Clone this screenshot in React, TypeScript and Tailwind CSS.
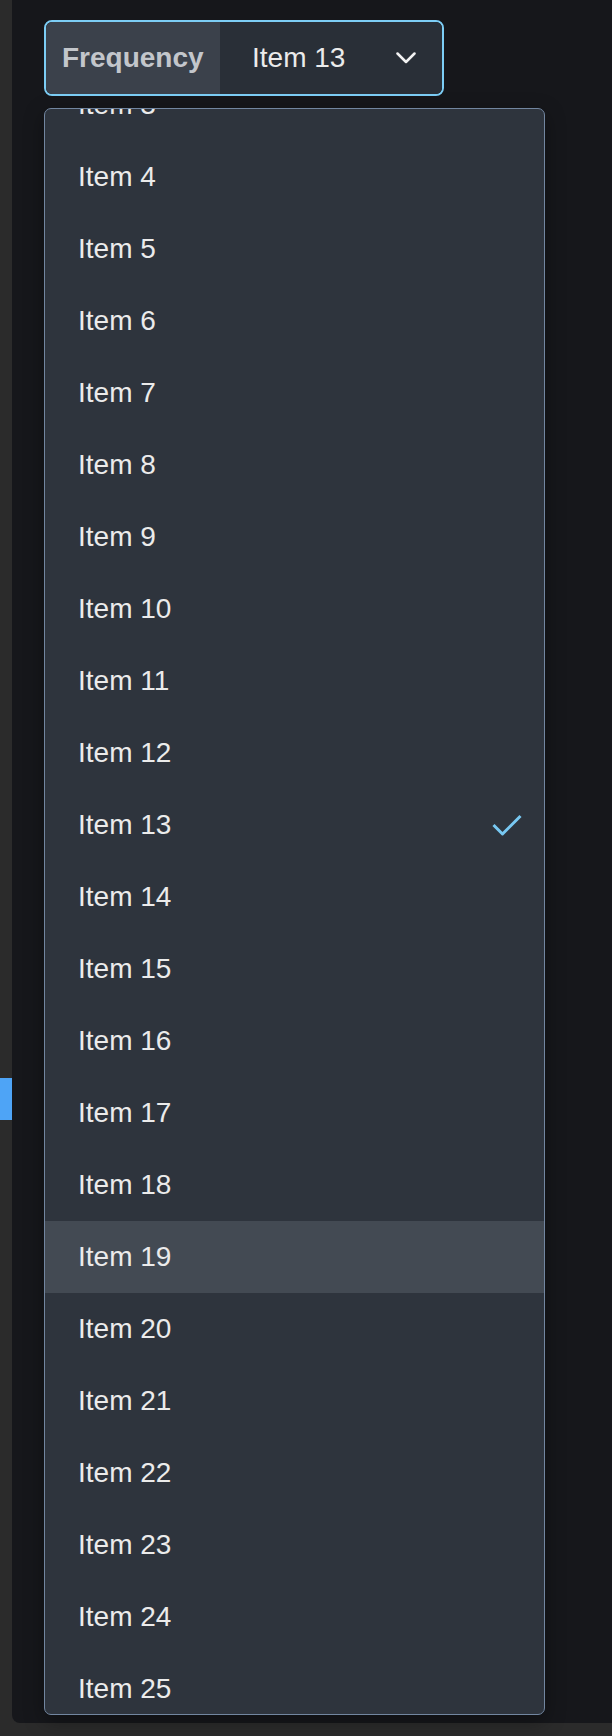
import React from "react";

const items = Array.from({ length: 23 }, (_, i) => i + 3);

export default function App() {
  return (
    <div
      className="flex w-[612px] h-[1736px] bg-[#2b2b2b] overflow-hidden"
      style={{ fontFamily: '"Liberation Sans", Arial, sans-serif' }}
    >
      <div className="w-[12px] shrink-0 flex flex-col">
        <div className="mt-[1078px] h-[42px] bg-[#4ea4f6]" />
      </div>
      <div className="flex-1 h-[1723px] bg-[#16171b] rounded-bl-[8px] pl-[32px] pt-[20px]">
        <div className="flex w-[400px] h-[76px] border-2 border-[#7ccdf5] rounded-[8px] overflow-hidden text-[28px]">
          <div className="w-[174px] shrink-0 bg-[#3b414b] pl-[16px] flex items-center font-bold text-[#c3c6cb]">
            Frequency
          </div>
          <div className="flex-1 bg-[#292f37] pl-[32px] pr-[26px] flex items-center justify-between text-[#ebebeb]">
            <span>Item 13</span>
            <svg width="20" height="12" viewBox="0 0 20 12" fill="none">
              <polyline
                points="1.5,1.5 10,10 18.5,1.5"
                stroke="#f2f2f2"
                strokeWidth="2.5"
                strokeLinecap="round"
                strokeLinejoin="round"
              />
            </svg>
          </div>
        </div>
        <div className="mt-[12px] w-[501px] h-[1607px] border border-[#7286a0] rounded-[7px] bg-[#2e343d] overflow-hidden shadow-[0_6px_20px_rgba(0,0,0,0.35)]">
          <div className="mt-[-40px]">
            {items.map((n) => (
              <div
                key={n}
                className={`h-[72px] flex items-center justify-between pl-[33px] pr-[22px] text-[28px] text-[#ebebeb] ${
                  n === 19 ? "bg-[#434a53]" : ""
                }`}
              >
                <span>Item {n}</span>
                {n === 13 && (
                  <svg width="30" height="22" viewBox="0 0 30 22" fill="none">
                    <polyline
                      points="1.5,11 10.5,20 28.5,2"
                      stroke="#78c8f2"
                      strokeWidth="3"
                      strokeLinejoin="round"
                    />
                  </svg>
                )}
              </div>
            ))}
          </div>
        </div>
      </div>
    </div>
  );
}
